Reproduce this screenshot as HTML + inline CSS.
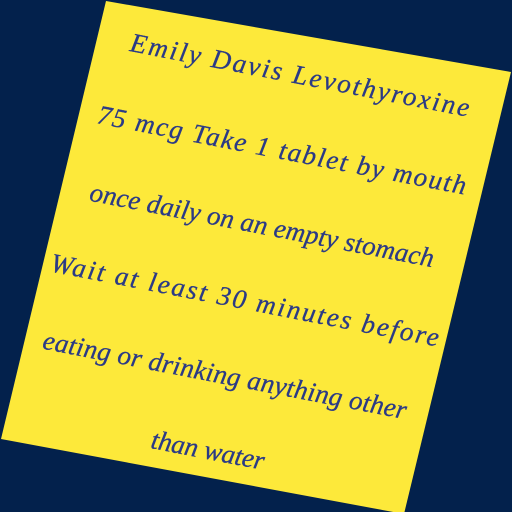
<!DOCTYPE html>
<html><head><meta charset="utf-8"><style>
html,body{margin:0;padding:0;background:#03214c;width:512px;height:512px;overflow:hidden}
</style></head><body>
<svg width="512" height="512" viewBox="0 0 512 512" xmlns="http://www.w3.org/2000/svg">
<rect width="512" height="512" fill="#03214c"/>
<polygon points="106,1 511,72 404,514 1,439" fill="#fde93a"/>
<g font-family="Liberation Serif, serif" font-style="italic" font-size="27" fill="#2b3a86" stroke="#2b3a86" stroke-width="0.3" text-anchor="middle">
<text x="300" y="84" transform="rotate(11 300 75)" textLength="345" lengthAdjust="spacing">Emily Davis Levothyroxine</text>
<text x="282" y="159" transform="rotate(11 282 150)" textLength="375" lengthAdjust="spacing">75 mcg Take 1 tablet by mouth</text>
<text x="262" y="234" transform="rotate(11 262 225)" textLength="350" lengthAdjust="spacing">once daily on an empty stomach</text>
<text x="245" y="309" transform="rotate(11 245 300)" textLength="395" lengthAdjust="spacing">Wait at least 30 minutes before</text>
<text x="225" y="384" transform="rotate(11 225 375)" textLength="370" lengthAdjust="spacing">eating or drinking anything other</text>
<text x="208" y="459" transform="rotate(11 208 450)" textLength="115" lengthAdjust="spacing">than water</text>
</g>
</svg>
</body></html>
